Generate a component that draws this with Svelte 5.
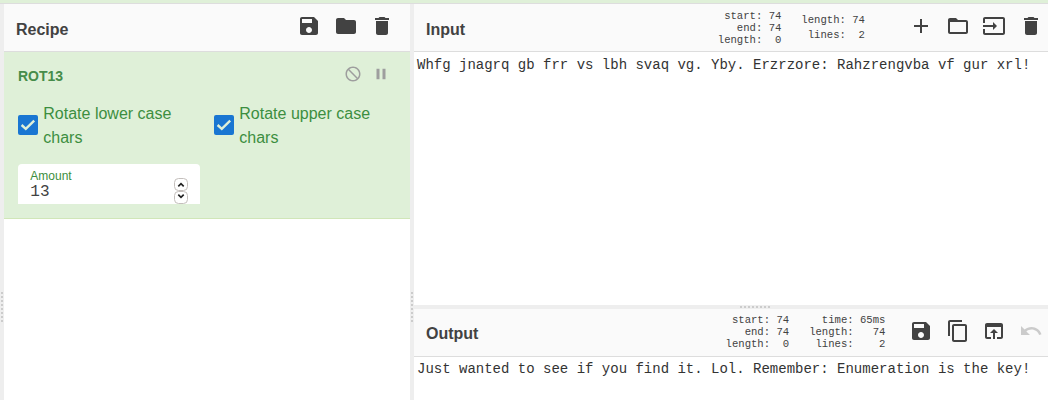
<script>
  const icons = {
    save: 'M17 3H5c-1.11 0-2 .9-2 2v14c0 1.1.89 2 2 2h14c1.1 0 2-.9 2-2V7l-4-4zm-5 16c-1.66 0-3-1.34-3-3s1.34-3 3-3 3 1.34 3 3-1.34 3-3 3zm3-10H5V5h10v4z',
    folder: 'M10 4H4c-1.1 0-1.99.9-1.99 2L2 18c0 1.1.9 2 2 2h16c1.1 0 2-.9 2-2V8c0-1.1-.9-2-2-2h-8l-2-2z',
    trash: 'M6 19c0 1.1.9 2 2 2h8c1.1 0 2-.9 2-2V7H6v12zM19 4h-3.5l-1-1h-5l-1 1H5v2h14V4z',
    add: 'M19 13h-6v6h-2v-6H5v-2h6V5h2v6h6v2z',
    folderOpen: 'M20 6h-8l-2-2H4c-1.1 0-1.99.9-1.99 2L2 18c0 1.1.9 2 2 2h16c1.1 0 2-.9 2-2V8c0-1.1-.9-2-2-2zm0 12H4V8h16v10z',
    input: 'M21 3.01H3c-1.1 0-2 .9-2 2V9h2V4.99h18v14.03H3V15H1v4.01c0 1.1.9 1.98 2 1.98h18c1.1 0 2-.88 2-1.98v-14c0-1.11-.9-2-2-2zM11 16l4-4-4-4v3H1v2h10v3z',
    copy: 'M16 1H4c-1.1 0-2 .9-2 2v14h2V3h12V1zm3 4H8c-1.1 0-2 .9-2 2v14c0 1.1.9 2 2 2h11c1.1 0 2-.9 2-2V7c0-1.1-.9-2-2-2zm0 16H8V7h11v14z',
    browser: 'M19 4H5c-1.11 0-2 .9-2 2v12c0 1.1.89 2 2 2h4v-2H5V8h14v10h-4v2h4c1.1 0 2-.9 2-2V6c0-1.1-.89-2-2-2zm-7 6l-4 4h3v6h2v-6h3l-4-4z',
    undo: 'M12.5 8c-2.65 0-5.05.99-6.9 2.6L2 7v9h9l-3.62-3.62c1.39-1.16 3.16-1.88 5.12-1.88 3.54 0 6.55 2.31 7.6 5.5l2.37-.78C21.08 11.03 17.15 8 12.5 8z',
    block: 'M12 2C17.52 2 22 6.48 22 12s-4.48 10-10 10S2 17.52 2 12 6.48 2 12 2zM20 12c0-4.42-3.58-8-8-8-1.85 0-3.55.63-4.9 1.69L18.31 16.9C19.37 15.55 20 13.85 20 12zm-8 8c1.85 0 3.55-.63 4.9-1.69L5.69 7.1C4.63 8.45 4 10.15 4 12c0 4.42 3.58 8 8 8z',
    pause: 'M6 19h4V5H6v14zm8-14v14h4V5h-4z'
  };
  const dots = Array(8);
  const inputSelection = ' start: 74\n   end: 74\nlength:  0';
  const inputLength = 'length: 74\n lines:  2';
  const outputSelection = ' start: 74\n   end: 74\nlength:  0';
  const outputLength = '  time: 65ms\nlength:   74\n lines:    2';
</script>

{#snippet icon(name, size = 24)}
  <svg width={size} height={size} viewBox="0 0 24 24" class:disabled={name === 'undo'}><path d={icons[name]} /></svg>
{/snippet}

{#snippet grip()}
  <span class="grip">{#each dots as _}<i></i>{/each}</span>
{/snippet}

<div class="app">
  <div class="banner"></div>
  <main>
    <div class="gutter edge">{@render grip()}</div>
    <section class="recipe">
      <header>
        <h1>Recipe</h1>
        <div class="tools">{@render icon('save')}{@render icon('folder')}{@render icon('trash')}</div>
      </header>
      <div class="operation">
        <div class="op-title">
          <h2>ROT13</h2>
          <div class="op-icons">{@render icon('block', 18)}{@render icon('pause', 18)}</div>
        </div>
        <div class="checks">
          {#each ['lower', 'upper'] as kind}
            <div class="check">
              <span class="box"><svg width="20" height="20" viewBox="0 0 20 20"><path d="M3.6 10 L7.8 13.9 L16.2 5.7" /></svg></span>
              <span>Rotate {kind} case chars</span>
            </div>
          {/each}
        </div>
        <div class="amount">
          <div class="field"><span class="label">Amount</span><span class="value">13</span></div>
          <div class="spinner">
            <span><svg width="8" height="6" viewBox="0 0 8 6"><path d="M1.3 4.3 L4 1.7 L6.7 4.3" /></svg></span>
            <span class="down"><svg width="8" height="6" viewBox="0 0 8 6"><path d="M1.3 1.7 L4 4.3 L6.7 1.7" /></svg></span>
          </div>
        </div>
      </div>
    </section>
    <div class="gutter">{@render grip()}</div>
    <div class="io">
      <section class="input">
        <header>
          <h1>Input</h1>
          <pre class="stats">{inputSelection}</pre>
          <pre class="stats two">{inputLength}</pre>
          <div class="tools">{@render icon('add')}{@render icon('folderOpen')}{@render icon('input')}{@render icon('trash')}</div>
        </header>
        <div class="code">Whfg jnagrq gb frr vs lbh svaq vg. Yby. Erzrzore: Rahzrengvba vf gur xrl!</div>
      </section>
      <div class="gutter horizontal">{@render grip()}</div>
      <section class="output">
        <header>
          <h1>Output</h1>
          <pre class="stats">{outputSelection}</pre>
          <pre class="stats three">{outputLength}</pre>
          <div class="tools">{@render icon('save')}{@render icon('copy')}{@render icon('browser')}{@render icon('undo')}</div>
        </header>
        <div class="code">Just wanted to see if you find it. Lol. Remember: Enumeration is the key!</div>
      </section>
    </div>
  </main>
</div>

<style>
  :global(body) { margin: 0; overflow: hidden; }
  * { box-sizing: border-box; }
  .app {
    width: 1048px; height: 400px; overflow: hidden;
    display: flex; flex-direction: column;
    background: #fff; color: #424242;
    font-family: "Liberation Sans", Arial, sans-serif;
  }
  .banner { height: 4px; flex: none; background: #dff0d8; border-bottom: 1px solid #ddd; }
  main { flex: 1; min-height: 0; display: flex; }
  svg { display: block; fill: currentColor; }
  .gutter { width: 4px; flex: none; background: #eee; display: flex; align-items: center; justify-content: center; }
  .gutter:not(.horizontal) { height: 606px; }
  .grip { display: flex; flex-direction: column; gap: 2px; }
  .grip i { width: 2px; height: 2px; background: #ccc; }
  .horizontal { width: 682px; height: 4px; }
  .horizontal .grip { flex-direction: row; }
  .recipe { width: 406px; flex: none; }
  header {
    height: 48px; display: flex; align-items: center;
    background: #fafafa; border-bottom: 1px solid #ddd; padding: 0 12px;
  }
  h1 { margin: 4px 0 0; font-size: 16px; line-height: 24px; font-weight: 700; flex: 1; }
  .output h1 { margin-top: 3px; }
  .tools { display: flex; gap: 12.5px; margin-bottom: 3px; }
  .io .tools { gap: 12.7px; }
  .recipe header { padding-right: 16px; }
  .operation { height: 167px; background: #dff0d8; color: #3c8e40; border-bottom: 1px solid #d0e6b8; padding: 13px 14px; }
  .op-title { display: flex; justify-content: space-between; align-items: center; height: 22px; }
  h2 { margin: 0; font-size: 14px; line-height: 22px; font-weight: 700; color: #468c4a; }
  .op-icons { display: flex; gap: 9.6px; padding: 0 6.4px 4px 0; color: #9e9e9e; }
  .checks { display: grid; grid-template-columns: 196px 182px; margin-top: 15px; font-size: 16px; line-height: 24px; }
  .check { display: flex; align-items: center; gap: 5.3px; }
  .check > span:last-child { width: 140px; }
  .box { width: 20px; height: 20px; flex: none; border-radius: 2px; background: #1976d2; margin-bottom: 2px; }
  .box path { fill: none; stroke: #dff0d8; stroke-width: 2.4; }
  .amount {
    width: 182px; height: 40px; margin-top: 14px; padding: 4px 12px 0 12.3px;
    display: flex; justify-content: space-between; background: #fff; border-radius: 4px 4px 0 0;
  }
  .field { display: flex; flex-direction: column; }
  .label { font-size: 12px; line-height: 16px; }
  .value { font: 16px/16px "Liberation Mono", monospace; color: #424242; }
  .spinner { padding-top: 10px; display: flex; flex-direction: column; }
  .spinner span {
    width: 14px; height: 13px; border: 1px solid #c4bfbc; border-radius: 4.5px;
    display: flex; align-items: center; justify-content: center;
  }
  .spinner .down { padding-bottom: 3px; }
  .spinner path { fill: none; stroke: #222; stroke-width: 1.7; }
  .io { flex: 1; min-width: 0; display: flex; flex-direction: column; overflow: hidden; }
  .io header { padding-right: 5px; }
  .input { height: 301px; flex: none; }
  .stats { margin: 0 20px 0 0; font: 10.6px/12px "Liberation Mono", monospace; color: #424242; }
  .two { line-height: 15px; margin-right: 44px; }
  .three { margin-right: 23.5px; }
  .output .stats { margin-bottom: 2px; }
  .code { padding: 3px 3px 2px; font: 14px/20px "Liberation Mono", monospace; color: #333; white-space: pre; }
  .output .code { padding-top: 2px; }
  .disabled { opacity: .25; }
</style>
